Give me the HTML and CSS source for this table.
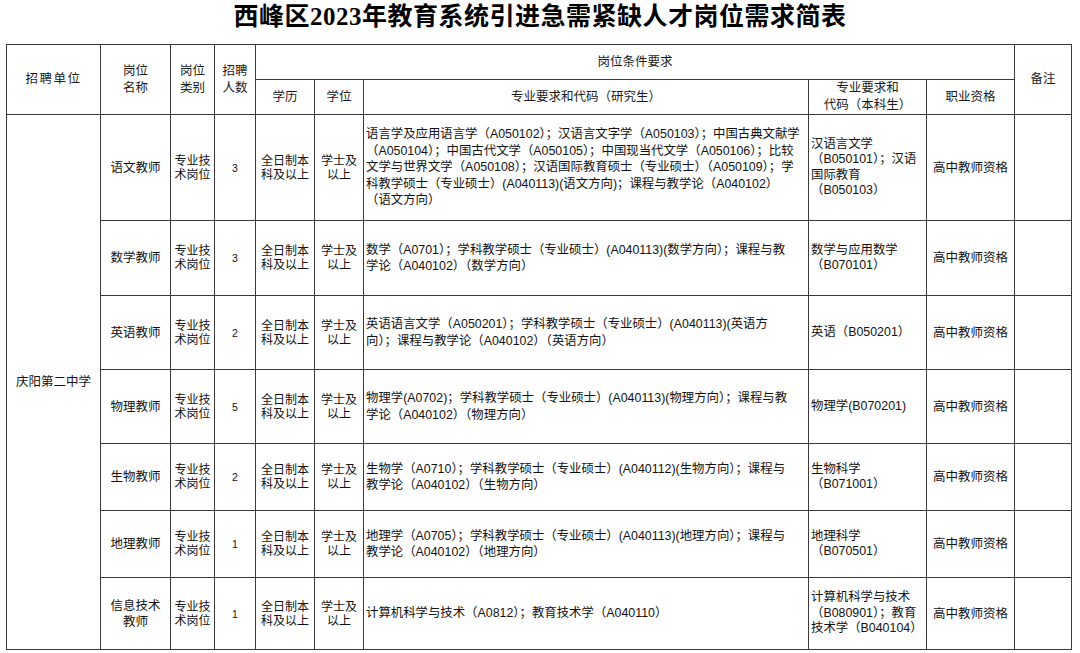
FILE: index.html
```html
<!DOCTYPE html>
<html lang="zh-CN">
<head>
<meta charset="utf-8">
<title>西峰区2023年教育系统引进急需紧缺人才岗位需求简表</title>
<link rel="stylesheet" href="styles.css">
</head>
<body>
<h1 class="title">西峰区2023年教育系统引进急需紧缺人才岗位需求简表</h1>
<table class="grid">
  <colgroup>
    <col class="c-unit"><col class="c-name"><col class="c-type"><col class="c-num">
    <col class="c-edu"><col class="c-deg"><col class="c-grad"><col class="c-ug">
    <col class="c-qual"><col class="c-note">
  </colgroup>
  <thead>
    <tr class="h1">
      <th rowspan="2" class="wide">招聘单位</th>
      <th rowspan="2">岗位<br>名称</th>
      <th rowspan="2">岗位<br>类别</th>
      <th rowspan="2">招聘<br>人数</th>
      <th colspan="5">岗位条件要求</th>
      <th rowspan="2">备注</th>
    </tr>
    <tr class="h2">
      <th>学历</th>
      <th>学位</th>
      <th>专业要求和代码（研究生）</th>
      <th>专业要求和<br>代码（本科生）</th>
      <th>职业资格</th>
    </tr>
  </thead>
  <tbody>
    <tr class="r1">
      <td rowspan="7" class="unit">庆阳第二中学</td>
      <td class="name">语文教师</td>
      <td class="two">专业技<br>术岗位</td>
      <td class="num">3</td>
      <td class="two">全日制本<br>科及以上</td>
      <td class="two">学士及<br>以上</td>
      <td class="grad">语言学及应用语言学（A050102）；汉语言文字学（A050103）；中国古典文献学<br>（A050104）；中国古代文学（A050105）；中国现当代文学（A050106）；比较<br>文学与世界文学（A050108）；汉语国际教育硕士（专业硕士）（A050109）；学<br>科教学硕士（专业硕士）(A040113)(语文方向)；课程与教学论（A040102）<br>（语文方向）</td>
      <td class="ug">汉语言文学<br>（B050101）；汉语<br>国际教育<br>（B050103）</td>
      <td class="qual">高中教师资格</td>
      <td></td>
    </tr>
    <tr class="r2">
      <td class="name">数学教师</td>
      <td class="two">专业技<br>术岗位</td>
      <td class="num">3</td>
      <td class="two">全日制本<br>科及以上</td>
      <td class="two">学士及<br>以上</td>
      <td class="grad">数学（A0701）；学科教学硕士（专业硕士）(A040113)(数学方向）；课程与教<br>学论（A040102）（数学方向）</td>
      <td class="ug">数学与应用数学<br>（B070101）</td>
      <td class="qual">高中教师资格</td>
      <td></td>
    </tr>
    <tr class="r3">
      <td class="name">英语教师</td>
      <td class="two">专业技<br>术岗位</td>
      <td class="num">2</td>
      <td class="two">全日制本<br>科及以上</td>
      <td class="two">学士及<br>以上</td>
      <td class="grad">英语语言文学（A050201）；学科教学硕士（专业硕士）(A040113)(英语方<br>向）；课程与教学论（A040102）（英语方向）</td>
      <td class="ug">英语（B050201）</td>
      <td class="qual">高中教师资格</td>
      <td></td>
    </tr>
    <tr class="r4">
      <td class="name">物理教师</td>
      <td class="two">专业技<br>术岗位</td>
      <td class="num">5</td>
      <td class="two">全日制本<br>科及以上</td>
      <td class="two">学士及<br>以上</td>
      <td class="grad">物理学(A0702)；学科教学硕士（专业硕士）(A040113)(物理方向）；课程与教<br>学论（A040102）（物理方向）</td>
      <td class="ug">物理学(B070201)</td>
      <td class="qual">高中教师资格</td>
      <td></td>
    </tr>
    <tr class="r5">
      <td class="name">生物教师</td>
      <td class="two">专业技<br>术岗位</td>
      <td class="num">2</td>
      <td class="two">全日制本<br>科及以上</td>
      <td class="two">学士及<br>以上</td>
      <td class="grad">生物学（A0710）；学科教学硕士（专业硕士）(A040112)(生物方向）；课程与<br>教学论（A040102）（生物方向）</td>
      <td class="ug">生物科学<br>（B071001）</td>
      <td class="qual">高中教师资格</td>
      <td></td>
    </tr>
    <tr class="r6">
      <td class="name">地理教师</td>
      <td class="two">专业技<br>术岗位</td>
      <td class="num">1</td>
      <td class="two">全日制本<br>科及以上</td>
      <td class="two">学士及<br>以上</td>
      <td class="grad">地理学（A0705）；学科教学硕士（专业硕士）(A040113)(地理方向）；课程与<br>教学论（A040102）（地理方向）</td>
      <td class="ug">地理科学<br>（B070501）</td>
      <td class="qual">高中教师资格</td>
      <td></td>
    </tr>
    <tr class="r7">
      <td class="name name2">信息技术<br>教师</td>
      <td class="two">专业技<br>术岗位</td>
      <td class="num">1</td>
      <td class="two">全日制本<br>科及以上</td>
      <td class="two">学士及<br>以上</td>
      <td class="grad">计算机科学与技术（A0812）；教育技术学（A040110）</td>
      <td class="ug">计算机科学与技术<br>（B080901）；教育<br>技术学（B040104）</td>
      <td class="qual">高中教师资格</td>
      <td></td>
    </tr>
  </tbody>
</table>
</body>
</html>
```
FILE: styles.css
```css
html, body {
  margin: 0;
  padding: 0;
  background: #ffffff;
}
body {
  font-family: "Liberation Sans", "Noto Sans CJK SC", sans-serif;
  color: #111111;
}
.title {
  margin: 0;
  height: 34px;
  line-height: 34px;
  text-align: center;
  font-family: "Liberation Serif", "Noto Sans CJK SC", serif;
  font-weight: 700;
  font-size: 25px;
  color: #000000;
  letter-spacing: 0.5px;
}
.grid {
  margin: 10px 0 0 6px;
  width: 1065px;
  table-layout: fixed;
  border-collapse: collapse;
  border: 1px solid #333333;
}
.c-unit { width: 94px; }
.c-name { width: 70px; }
.c-type { width: 44px; }
.c-num { width: 41px; }
.c-edu { width: 59px; }
.c-deg { width: 49px; }
.c-grad { width: 445px; }
.c-ug { width: 118px; }
.c-qual { width: 88px; }
.c-note { width: 57px; }
.grid th, .grid td {
  border: 1px solid #3a3a3a;
  padding: 0;
  vertical-align: middle;
  text-align: center;
  overflow: hidden;
}
.grid th {
  font-weight: 400;
  font-size: 12.5px;
  line-height: 17px;
  color: #1a1a1a;
}
.grid th.wide {
  letter-spacing: 1.5px;
}
.h1 { height: 35px; }
.h2 { height: 32px; }
.r1 { height: 106px; }
.r2 { height: 75px; }
.r3 { height: 74px; }
.r4 { height: 74px; }
.r5 { height: 67px; }
.r6 { height: 67px; }
.r7 { height: 72px; }
.grid td {
  font-size: 12px;
  line-height: 14px;
}
.grid td.unit {
  font-size: 12.5px;
}
.grid td.name {
  font-size: 12.5px;
}
.grid td.name2 {
  line-height: 16px;
}
.grid td.num {
  font-size: 10.5px;
}
.grid td.grad {
  text-align: left;
  padding-left: 2px;
  line-height: 16.5px;
  white-space: nowrap;
  font-size: 12.4px;
}
.grid td.ug {
  text-align: left;
  padding-left: 2px;
  line-height: 15.5px;
  white-space: nowrap;
  font-size: 12.4px;
}
.grid td.qual {
  font-size: 12.5px;
}
```
